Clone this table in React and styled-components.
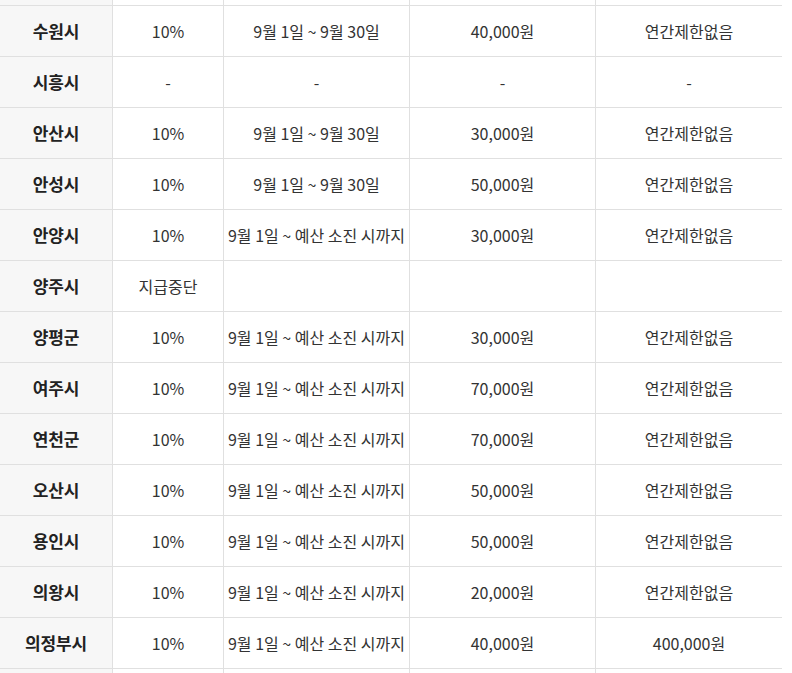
import React from 'react';
import styled, { createGlobalStyle } from 'styled-components';

const GlobalStyle = createGlobalStyle`
  html, body {
    margin: 0;
    padding: 0;
    background: #fff;
  }
  body {
    font-family: "Noto Sans CJK KR", "Noto Sans", sans-serif;
  }
`;

const Page = styled.div`
  width: 792px;
  height: 673px;
  overflow: hidden;
`;

const Table = styled.div`
  width: 782px;
  display: flex;
  flex-direction: column;
`;

const Row = styled.div`
  display: grid;
  grid-template-columns: 113px 111px 186px 186px 186px;
  height: ${p => p.$h || 51}px;
  border-bottom: 1px solid #e0e0e0;
  box-sizing: border-box;
`;

const Cell = styled.div`
  display: flex;
  align-items: center;
  justify-content: center;
  padding-bottom: 1px;
  border-right: ${p => (p.$last ? 'none' : '1px solid #e0e0e0')};
  font-size: 16px;
  letter-spacing: 0;
  color: #333;
  white-space: nowrap;
  box-sizing: border-box;
`;

const Head = styled(Cell)`
  background: #f7f7f7;
  font-size: 17px;
  font-weight: 700;
  letter-spacing: -0.1px;
  color: #222;
`;

const LONG = '9월 1일 ~ 예산 소진 시까지';
const MONTH = '9월 1일 ~ 9월 30일';
const NOLIMIT = '연간제한없음';

const rows = [
  ['수원시', '10%', MONTH, '40,000원', NOLIMIT],
  ['시흥시', '-', '-', '-', '-'],
  ['안산시', '10%', MONTH, '30,000원', NOLIMIT],
  ['안성시', '10%', MONTH, '50,000원', NOLIMIT],
  ['안양시', '10%', LONG, '30,000원', NOLIMIT],
  ['양주시', '지급중단', '', '', ''],
  ['양평군', '10%', LONG, '30,000원', NOLIMIT],
  ['여주시', '10%', LONG, '70,000원', NOLIMIT],
  ['연천군', '10%', LONG, '70,000원', NOLIMIT],
  ['오산시', '10%', LONG, '50,000원', NOLIMIT],
  ['용인시', '10%', LONG, '50,000원', NOLIMIT],
  ['의왕시', '10%', LONG, '20,000원', NOLIMIT],
  ['의정부시', '10%', LONG, '40,000원', '400,000원'],
];

const DataRow = ({ cells, h }) => (
  <Row $h={h}>
    <Head>{cells[0]}</Head>
    <Cell>{cells[1]}</Cell>
    <Cell>{cells[2]}</Cell>
    <Cell>{cells[3]}</Cell>
    <Cell $last>{cells[4]}</Cell>
  </Row>
);

const App = () => (
  <>
    <GlobalStyle />
    <Page>
      <Table>
        <DataRow cells={['', '', '', '', '']} h={6} />
        {rows.map(r => (
          <DataRow key={r[0]} cells={r} />
        ))}
        <DataRow cells={['', '', '', '', '']} />
      </Table>
    </Page>
  </>
);

export default App;
